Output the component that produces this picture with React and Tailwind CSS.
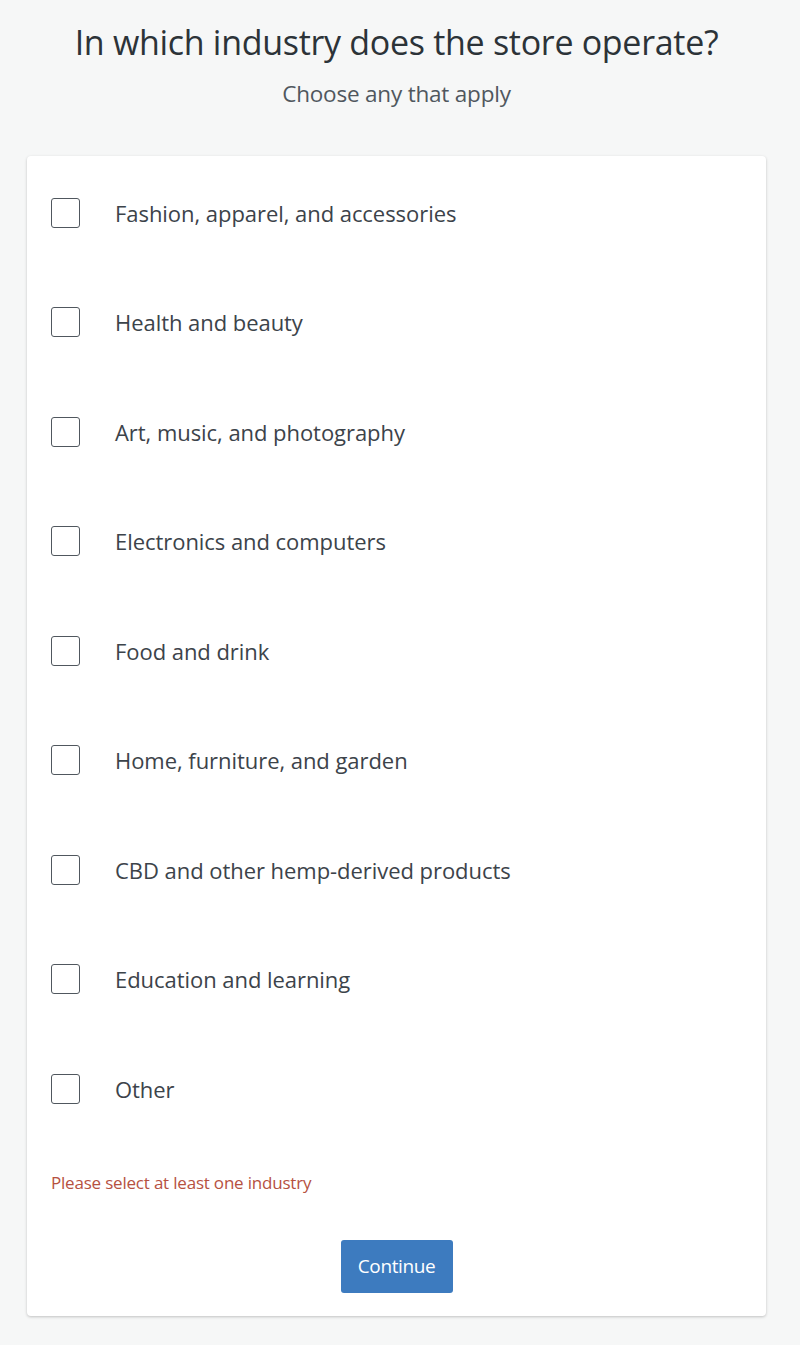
import React, { useState } from 'react';

const industrias = [
  'Fashion, apparel, and accessories',
  'Health and beauty',
  'Art, music, and photography',
  'Electronics and computers',
  'Food and drink',
  'Home, furniture, and garden',
  'CBD and other hemp-derived products',
  'Education and learning',
  'Other',
];

export default function App() {
  const [checked, setChecked] = useState([]);

  const toggle = (i) => {
    setChecked((prev) => (prev.includes(i) ? prev.filter((x) => x !== i) : [...prev, i]));
  };

  return (
    <div
      className="min-h-[1345px] bg-[#f6f7f7] text-[#3c434a]"
      style={{ fontFamily: '"Open Sans", "Noto Sans", sans-serif' }}
    >
      <div className="ml-[27px] w-[739px]">
        <h1 className="pt-[18px] text-center text-[34px] leading-[48px] tracking-[-0.3px] text-[#2c3338]">
          In which industry does the store operate?
        </h1>
        <p className="mt-[13px] text-center text-[22.5px] leading-[30px] text-[#50575e] tracking-[-0.2px]">
          Choose any that apply
        </p>

        <div className="mt-[47px] rounded-[4px] bg-white shadow-[0_1px_3px_rgba(0,0,0,0.22)] px-[24px] pt-[2px] pb-[23px]">
          {industrias.map((nombre, idx) => (
            <label key={idx} className="flex h-[109.5px] items-center cursor-pointer">
              <span
                onClick={() => toggle(idx)}
                className={`flex h-[30px] w-[29px] shrink-0 items-center justify-center rounded-[3px] border-[1.5px] border-[#50575e] ${checked.includes(idx) ? 'bg-[#3d7bbf]' : 'bg-white'}`}
              />
              <span className="ml-[35px] text-[22px] leading-[30px] text-[#3c434a] tracking-[-0.05px]">{nombre}</span>
            </label>
          ))}

          <p className="mt-[27px] text-[17px] leading-[24px] text-[#b6513f] tracking-[-0.2px]">
            Please select at least one industry
          </p>

          <div className="mt-[45px] flex justify-center">
            <button className="h-[53px] w-[112px] rounded-[3px] bg-[#3d7bbf] text-[19px] text-white tracking-[-0.4px]">
              Continue
            </button>
          </div>
        </div>
      </div>
    </div>
  );
}
